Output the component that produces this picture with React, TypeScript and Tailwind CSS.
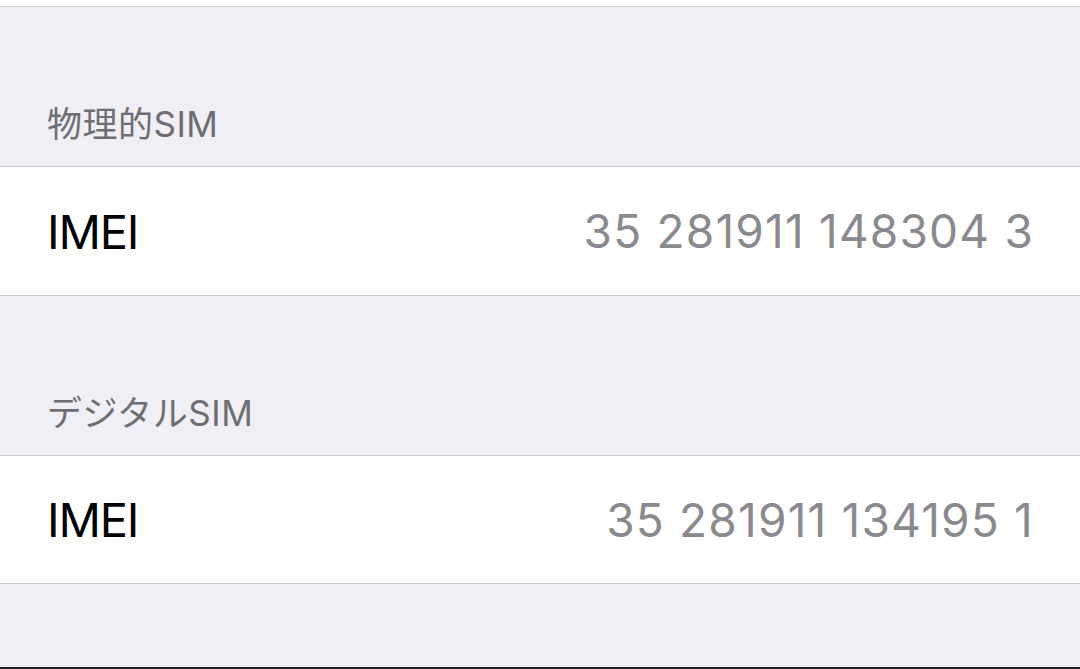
export default function App() {
  const font = { fontFamily: 'Inter, "Noto Sans CJK JP", sans-serif' };
  const Header = ({ text }: { text: string }) => (
    <div className="h-[159px] flex items-end pl-[47px] pb-[24px]">
      <span className="text-[35px] leading-[36px] text-[#6d6d72] tracking-[0.5px]">{text}</span>
    </div>
  );
  const Row = ({ value, h }: { value: string; h: string }) => (
    <div className={`bg-white border-y border-[#c8c7cc] flex items-center justify-between pl-[47px] pr-[47px] ${h}`}>
      <span className="text-[47px] leading-none text-black tracking-[-1.2px]">IMEI</span>
      <span className="text-[46px] leading-none text-[#8a8a8e] tracking-[1.2px] mr-[-1px]">{value}</span>
    </div>
  );
  return (
    <div className="w-[1080px] h-[669px] bg-[#f0eff5] flex flex-col overflow-hidden" style={font}>
      <div className="h-[7px] bg-white border-b border-[#c8c7cc] shrink-0" />
      <Header text="物理的SIM" />
      <Row value="35 281911 148304 3" h="h-[130px]" />
      <Header text="デジタルSIM" />
      <Row value="35 281911 134195 1" h="h-[129px]" />
      <div className="flex-1" />
      <div className="h-[2px] bg-[#222222] shrink-0" />
    </div>
  );
}
